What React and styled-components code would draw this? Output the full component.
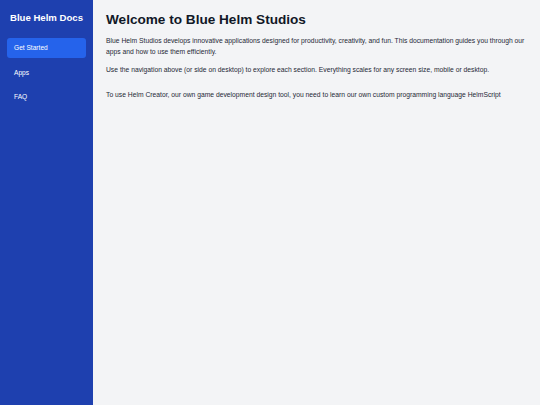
import styled, { createGlobalStyle } from "styled-components";

const GlobalStyle = createGlobalStyle`
  html, body {
    margin: 0;
    padding: 0;
    height: 100%;
  }
  body {
    font-family: "Liberation Sans", Arial, sans-serif;
    background: #f3f4f6;
  }
  #root {
    height: 100%;
  }
`;

const Layout = styled.div`
  display: flex;
  min-height: 405px;
  height: 100%;
`;

const Sidebar = styled.aside`
  width: 93px;
  flex-shrink: 0;
  background: #1e40af;
  color: #ffffff;
  padding: 12px 7px;
  box-sizing: border-box;
`;

const Brand = styled.h1`
  margin: 0 0 14px;
  font-size: 9.6px;
  font-weight: 700;
  text-align: center;
  line-height: 12px;
  white-space: nowrap;
`;

const Nav = styled.nav`
  display: flex;
  flex-direction: column;
  gap: 4.5px;
`;

const NavItem = styled.a`
  display: block;
  padding: 6px 7px;
  border-radius: 3px;
  font-size: 6.6px;
  line-height: 8px;
  color: #ffffff;
  background: ${(p) => (p.$active ? "#2563eb" : "transparent")};
  text-decoration: none;
  cursor: pointer;
`;

const Main = styled.main`
  flex: 1;
  padding: 12px 13px;
  color: #1f2937;
`;

const Title = styled.h2`
  margin: 0 0 7px;
  font-size: 13.6px;
  line-height: 16px;
  font-weight: 700;
  color: #111827;
`;

const Text = styled.p`
  margin: 0 0 6.5px;
  font-size: 6.75px;
  line-height: 11px;
  color: #1f2937;
`;

const Spacer = styled.div`
  height: 7.5px;
`;

const App = () => {
  return (
    <>
      <GlobalStyle />
      <Layout>
        <Sidebar>
          <Brand>Blue Helm Docs</Brand>
          <Nav>
            <NavItem $active>Get Started</NavItem>
            <NavItem>Apps</NavItem>
            <NavItem>FAQ</NavItem>
          </Nav>
        </Sidebar>
        <Main>
          <Title>Welcome to Blue Helm Studios</Title>
          <Text>
            Blue Helm Studios develops innovative applications designed for
            productivity, creativity, and fun. This documentation guides you
            through our apps and how to use them efficiently.
          </Text>
          <Text>
            Use the navigation above (or side on desktop) to explore each
            section. Everything scales for any screen size, mobile or desktop.
          </Text>
          <Spacer />
          <Text>
            To use Helm Creator, our own game development design tool, you need
            to learn our own custom programming language HelmScript
          </Text>
        </Main>
      </Layout>
    </>
  );
};

export default App;
